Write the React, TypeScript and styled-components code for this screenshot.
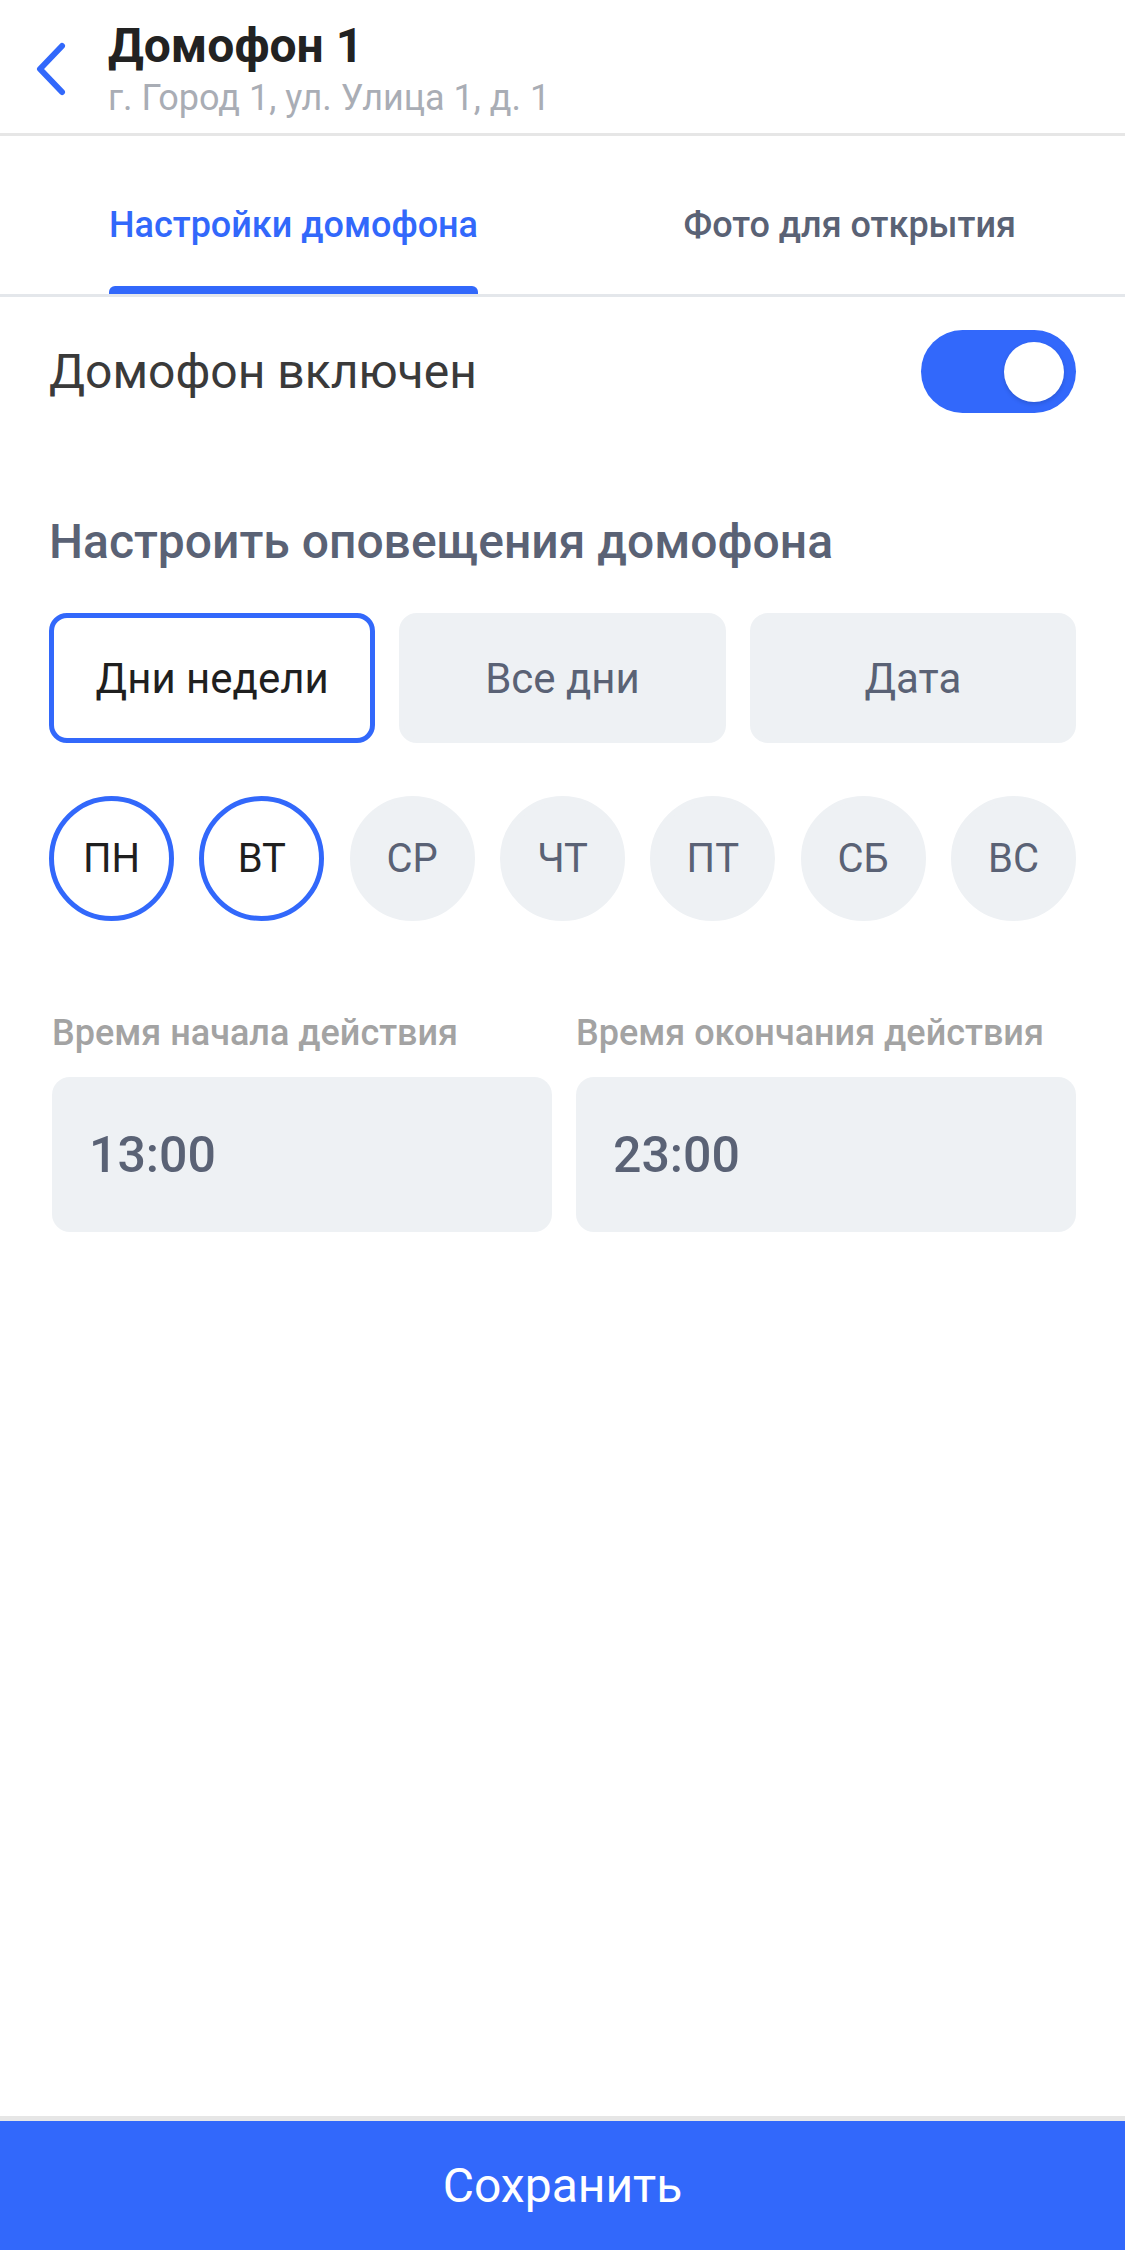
import React, { useState } from "react";
import styled, { createGlobalStyle } from "styled-components";

const GlobalStyle = createGlobalStyle`
  html, body { margin: 0; padding: 0; background: #ffffff; }
  body { font-family: Roboto, "Noto Sans", Arial, sans-serif; -webkit-font-smoothing: antialiased; }
  * { box-sizing: border-box; }
`;

const BLUE = "#3268FB";
const GRAY_BG = "#EEF1F4";
const SLATE = "#5A6275";

const Page = styled.div`
  min-height: 2250px;
  display: flex;
  flex-direction: column;
  background: #fff;
`;

const Header = styled.header`
  display: flex;
  align-items: center;
  padding: 17px 0 13px 35px;
  border-bottom: 3px solid #e6e6e6;
`;

const BackButton = styled.button`
  border: 0;
  background: none;
  padding: 0;
  margin-right: 41px;
  display: flex;
  cursor: pointer;
`;

const TitleBlock = styled.div`
  display: flex;
  flex-direction: column;
`;

const Title = styled.h1`
  margin: 0;
  font-size: 48px;
  line-height: 57px;
  font-weight: 700;
  color: #222222;
`;

const Subtitle = styled.div`
  margin-top: 2px;
  font-size: 36px;
  line-height: 44px;
  color: #a9adb5;
`;

const TabBar = styled.nav`
  display: flex;
  justify-content: space-between;
  padding: 0 109px;
  border-bottom: 3px solid #e4e7eb;
`;

const Tab = styled.div`
  display: flex;
  flex-direction: column;
  padding-top: 67px;
  cursor: pointer;
`;

const TabLabel = styled.span<{ $active?: boolean }>`
  font-size: 36px;
  line-height: 44px;
  font-weight: 500;
  color: ${(p) => (p.$active ? BLUE : SLATE)};
  white-space: nowrap;
`;

const TabIndicator = styled.span<{ $active?: boolean }>`
  margin-top: 39px;
  height: 8px;
  border-radius: 6px 6px 0 0;
  background: ${(p) => (p.$active ? BLUE : "transparent")};
`;

const Content = styled.main`
  flex: 1;
  display: flex;
  flex-direction: column;
  padding: 33px 49px 0;
`;

const ToggleRow = styled.div`
  display: flex;
  align-items: center;
  justify-content: space-between;
`;

const ToggleLabel = styled.span`
  font-size: 48px;
  line-height: 56px;
  color: #3a3a3a;
`;

const Toggle = styled.button<{ $on: boolean }>`
  width: 155px;
  height: 83px;
  border-radius: 42px;
  border: 0;
  padding: 0 12px;
  display: flex;
  align-items: center;
  justify-content: ${(p) => (p.$on ? "flex-end" : "flex-start")};
  background: ${(p) => (p.$on ? BLUE : "#cfd4dc")};
  cursor: pointer;
`;

const Knob = styled.span`
  width: 60px;
  height: 60px;
  border-radius: 50%;
  background: #fff;
  box-shadow: 0 2px 4px rgba(0, 0, 0, 0.15);
`;

const SectionTitle = styled.h2`
  margin: 101px 0 0;
  font-size: 48px;
  line-height: 56px;
  font-weight: 500;
  color: ${SLATE};
`;

const Segments = styled.div`
  margin-top: 43px;
  display: grid;
  grid-template-columns: repeat(3, 1fr);
  gap: 24px;
`;

const Segment = styled.button<{ $active?: boolean }>`
  height: 130px;
  border-radius: 18px;
  border: 5px solid ${(p) => (p.$active ? BLUE : GRAY_BG)};
  background: ${(p) => (p.$active ? "#fff" : GRAY_BG)};
  font-family: inherit;
  font-size: 42px;
  color: ${(p) => (p.$active ? "#1f1f1f" : SLATE)};
  cursor: pointer;
`;

const Days = styled.div`
  margin-top: 53px;
  display: flex;
  justify-content: space-between;
`;

const Day = styled.button<{ $active?: boolean }>`
  width: 125px;
  height: 125px;
  border-radius: 50%;
  border: 5px solid ${(p) => (p.$active ? BLUE : GRAY_BG)};
  background: ${(p) => (p.$active ? "#fff" : GRAY_BG)};
  font-family: inherit;
  font-size: 40px;
  color: ${(p) => (p.$active ? "#1f1f1f" : SLATE)};
  padding: 0;
  cursor: pointer;
`;

const TimeGrid = styled.div`
  margin-top: 90px;
  display: grid;
  grid-template-columns: 1fr 1fr;
  gap: 24px;
  padding-left: 3px;
`;

const Field = styled.label`
  display: flex;
  flex-direction: column;
`;

const FieldLabel = styled.span`
  font-size: 36px;
  line-height: 44px;
  font-weight: 500;
  color: #a3a3a3;
  white-space: nowrap;
`;

const TimeBox = styled.div`
  margin-top: 22px;
  height: 155px;
  border-radius: 18px;
  background: ${GRAY_BG};
  display: flex;
  align-items: center;
  padding-left: 37px;
  font-size: 50px;
  font-weight: 500;
  color: ${SLATE};
`;

const Footer = styled.footer`
  border-top: 5px solid #e6e6e6;
`;

const SaveButton = styled.button`
  width: 100%;
  height: 129px;
  border: 0;
  background: ${BLUE};
  color: #fff;
  font-family: inherit;
  font-size: 48px;
  font-weight: 400;
  cursor: pointer;
`;

const ChevronLeft = () => (
  <svg width="32" height="56" viewBox="0 0 32 56" fill="none">
    <polyline
      points="27,5 5,28 27,51"
      stroke={BLUE}
      strokeWidth="6"
      strokeLinecap="round"
      strokeLinejoin="round"
    />
  </svg>
);

const MODES = ["Дни недели", "Все дни", "Дата"];
const DAYS = ["ПН", "ВТ", "СР", "ЧТ", "ПТ", "СБ", "ВС"];

export default function App() {
  const [on, setOn] = useState(true);
  const [mode, setMode] = useState(0);
  const [tab, setTab] = useState(0);
  const [days, setDays] = useState<number[]>([0, 1]);

  const toggleDay = (i: number) =>
    setDays((d) => (d.includes(i) ? d.filter((x) => x !== i) : [...d, i]));

  return (
    <Page>
      <GlobalStyle />
      <Header>
        <BackButton aria-label="Назад">
          <ChevronLeft />
        </BackButton>
        <TitleBlock>
          <Title>Домофон 1</Title>
          <Subtitle>г. Город 1, ул. Улица 1, д. 1</Subtitle>
        </TitleBlock>
      </Header>
      <TabBar>
        {["Настройки домофона", "Фото для открытия"].map((t, i) => (
          <Tab key={t} onClick={() => setTab(i)}>
            <TabLabel $active={tab === i}>{t}</TabLabel>
            <TabIndicator $active={tab === i} />
          </Tab>
        ))}
      </TabBar>
      <Content>
        <ToggleRow>
          <ToggleLabel>Домофон включен</ToggleLabel>
          <Toggle $on={on} onClick={() => setOn(!on)}>
            <Knob />
          </Toggle>
        </ToggleRow>
        <SectionTitle>Настроить оповещения домофона</SectionTitle>
        <Segments>
          {MODES.map((m, i) => (
            <Segment key={m} $active={mode === i} onClick={() => setMode(i)}>
              {m}
            </Segment>
          ))}
        </Segments>
        <Days>
          {DAYS.map((d, i) => (
            <Day key={d} $active={days.includes(i)} onClick={() => toggleDay(i)}>
              {d}
            </Day>
          ))}
        </Days>
        <TimeGrid>
          <Field>
            <FieldLabel>Время начала действия</FieldLabel>
            <TimeBox>13:00</TimeBox>
          </Field>
          <Field>
            <FieldLabel>Время окончания действия</FieldLabel>
            <TimeBox>23:00</TimeBox>
          </Field>
        </TimeGrid>
      </Content>
      <Footer>
        <SaveButton>Сохранить</SaveButton>
      </Footer>
    </Page>
  );
}
